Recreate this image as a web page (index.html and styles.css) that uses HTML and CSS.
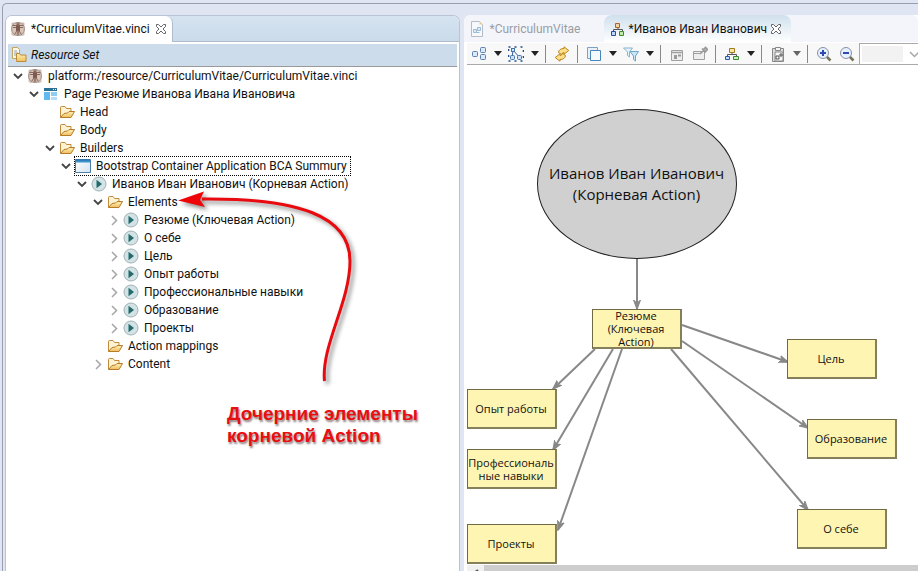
FILE: index.html
```html
<!DOCTYPE html>
<html lang="ru">
<head>
<meta charset="utf-8">
<title>CurriculumVitae.vinci</title>
<link rel="stylesheet" href="styles.css">
</head>
<body>
<svg class="defs" aria-hidden="true">
  <defs>
    <linearGradient id="folderFill" x1="0" y1="0" x2="0" y2="1"><stop offset="0" stop-color="#fff0b8"/><stop offset="1" stop-color="#f0bf5c"/></linearGradient>
    <linearGradient id="winFill" x1="0" y1="0" x2="1" y2="1"><stop offset="0" stop-color="#fff"/><stop offset="1" stop-color="#d3e4f2"/></linearGradient>
    <symbol id="i-vinci" viewBox="0 0 16 16"><path d="M2 2h12v11.500H2z" fill="#dccbc0"/><circle cx="8" cy="8" r="6.5" fill="#d9c6b9" stroke="#a38f84"/><path d="M2 4.500h12M3 6.500h10" stroke="#8a695e" stroke-width="1.200"/><path d="M6 4.500h4v5.500H6z" fill="#7d5a50"/><path d="M7 9.500l-3 5M9 9.500l3 5M7.300 9.500v5M8.700 9.500v5" stroke="#8a695e" stroke-width="1"/><circle cx="8" cy="3" r="1.700" fill="#8d6658"/><path d="M2 2v12h12V2z" fill="none" stroke="#b9a9a0" stroke-width=".7"/></symbol>
    <symbol id="i-page" viewBox="0 0 16 16"><path d="M1 2h13v3H1z" fill="#2c6f94"/><path d="M10 3h1v1h-1zM12 3h1v1h-1z" fill="#fff"/><path d="M1 6h6v8H1z" fill="#63b9ee"/><path d="M8 6h6v4H8z" fill="#8fcdf3"/><path d="M8 11h6v3H8z" fill="#b4def7"/></symbol>
    <symbol id="i-folder" viewBox="0 0 16 16"><path d="M1.500 13.500V3.500q0-1 1-1h3.500l1.500 2h4.500v3" fill="#fdf3d2" stroke="#c08a3a"/><path d="M1.500 13.500l3.500-4 3.500-.500 1.500-1.500h5.500l-3.500 6z" fill="url(#folderFill)" stroke="#b67a2b"/></symbol>
    <symbol id="i-window" viewBox="0 0 16 16"><path d="M.5 1.500h15v13H.5z" fill="url(#winFill)" stroke="#4c7fa6"/><path d="M1 2h14v2.500H1z" fill="#3c93cf"/><path d="M1 2h14" stroke="#2471a8"/></symbol>
    <symbol id="i-action" viewBox="0 0 16 16"><circle cx="8" cy="8" r="7" fill="#d3e3e5" stroke="#a0b2b5"/><path d="M5.500 3.800l5.500 4.200-5.500 4.200z" fill="#226a6c"/></symbol>
    <symbol id="i-resource" viewBox="0 0 16 16"><path d="M1.500 11.500v-11h5l2 2v9z" fill="#fdf8e6" stroke="#c6a45f"/><path d="M3 4h3M3 6h4M3 8h2" stroke="#8fa4c4"/><path d="M5.500 13.500v-7h3l1 1.500h5.500v6.500h-9.500z" fill="url(#folderFill)" stroke="#b98a38"/></symbol>
    <symbol id="i-open" viewBox="0 0 12 12"><path d="M2 4l4 4 4-4" fill="none" stroke="#444" stroke-width="1.800"/></symbol>
    <symbol id="i-shut" viewBox="0 0 12 12"><path d="M4 2l4.500 4.500L4 11" fill="none" stroke="#a6a6a6" stroke-width="1.500"/></symbol>
    <symbol id="i-close" viewBox="0 0 12 12"><path d="M1.500 1.500h2L6 4l2.500-2.500h2v2L8 6l2.500 2.500v2h-2L6 8l-2.500 2.500h-2v-2L4 6 1.500 3.500z" fill="#fff" stroke="#666"/></symbol>
    <symbol id="i-drop" viewBox="0 0 8 5"><path d="M0 0h8L4 5z" fill="currentColor"/></symbol>
    <symbol id="i-diagfile" viewBox="0 0 14 16"><path d="M1.500.500h8l3 3v12h-11z" fill="#f6f8fb" stroke="#b3bcc9"/><path d="M9.500.500l3 3h-3z" fill="#f1cf92"/><path d="M3.500 8.500h3v3h-3zM7.500 6.500h3v3h-3zM6.500 11.500h3" fill="#dcebf7" stroke="#9bbbd6"/></symbol>
    <symbol id="i-tree" viewBox="0 0 16 16"><path d="M8 6v3M3.500 11V8.500h9V11" fill="none" stroke="#555"/><path d="M5.500 2.500h5v4h-5z" fill="#f9e7a6" stroke="#a27a1c"/><path d="M1.500 10.500h4v3h-4z" fill="#bfe0ff" stroke="#2e5d9b"/><path d="M9.500 10.500h5v3h-5z" fill="#c8eebc" stroke="#3d8a34"/></symbol>
    <symbol id="i-treered" viewBox="0 0 16 16"><path d="M8 6v3M3.500 11V8.500h9V11" fill="none" stroke="#555"/><path d="M5.500 2.500h4v4h-4z" fill="#f6d4a2" stroke="#b0602c"/><path d="M1.500 10.500h4v4h-4z" fill="#bfd6ff" stroke="#2c4d9b"/><path d="M9.500 10.500h4v4h-4z" fill="#bdeca8" stroke="#3d8a34"/></symbol>
    <symbol id="i-arrange" viewBox="0 0 16 16"><g fill="#dbe9f8" stroke="#5a7fb0"><rect x="1.500" y="5.500" width="5" height="5" rx="1"/><rect x="9.500" y="1.500" width="5" height="5" rx="1"/><rect x="9.500" y="8.500" width="5" height="5" rx="1"/></g></symbol>
    <symbol id="i-select" viewBox="0 0 16 16"><path d="M.5 1h15v14H.5z" fill="none" stroke="#234d80" stroke-width="1.600" stroke-dasharray="2 4"/><path d="M5 4l7 8M5 5l-1 6" stroke="#3a5f93"/><g fill="#cfe3f7" stroke="#4573ab"><rect x="3.500" y="2.500" width="3" height="3"/><rect x="2.500" y="9.500" width="4" height="4" rx="1"/><rect x="9.500" y="9.500" width="4" height="4" rx="1"/></g></symbol>
    <symbol id="i-refresh" viewBox="0 0 16 16"><g fill="#fde08c" stroke="#bd861d"><path d="M4.500 6.500q.500-4 5.500-4V.800l4.800 3.700L10 8.200V6.500q-2 0-2.500 2z"/><path d="M11.500 9.500q-.500 4-5.500 4v1.700l-4.800-3.700L6 7.800v1.700q2 0 2.500-2z"/></g></symbol>
    <symbol id="i-layers" viewBox="0 0 16 16"><path d="M1.500 1.500h10v11h-10z" fill="#e8f1f9" stroke="#7f9fc4"/><path d="M4.500 4.500h10v10h-10z" fill="#f4fbff" stroke="#4a87b7"/></symbol>
    <symbol id="i-filter" viewBox="0 0 16 16"><path d="M.5 2h9L6.500 6v5l-2-1.500V6z" fill="#e3f3fb" stroke="#87b5cd"/><path d="M7 5.500h8.500l-3 4.500v5l-2-1.500V10z" fill="#c9e8f7" stroke="#6fa6c4"/></symbol>
    <symbol id="i-pane" viewBox="0 0 16 16"><path d="M2.500 4.500h11v10h-11z" fill="#eee" stroke="#a0a0a0"/><path d="M3 6.500h10" stroke="#a0a0a0" stroke-width="1.500"/><path d="M5 9h3v4H5zM9 8.500h3v2H9z" fill="#999"/></symbol>
    <symbol id="i-pin" viewBox="0 0 16 16"><path d="M1.500 5.500h11v8h-11z" fill="#eee" stroke="#a0a0a0"/><path d="M2 7.500h7" stroke="#a0a0a0"/><path d="M8 8l4-4M10 2.500l4 4M11.500 3.500l2-2 2 2-2 2" stroke="#999" stroke-width="1.600" fill="#bbb"/></symbol>
    <symbol id="i-paste" viewBox="0 0 16 16"><path d="M2.500 2.500h11v13h-11z" fill="#ddd" stroke="#888"/><path d="M5.500 1.500h5v3h-5z" fill="#f5f5f5" stroke="#888"/><path d="M5 6h8v9H5z" fill="#f7f7f7" stroke="#888"/><path d="M6 10h3v3H6zM10 8h2v2h-2z" fill="none" stroke="#555"/></symbol>
    <symbol id="i-zoomin" viewBox="0 0 16 16"><path d="M10.500 10.500l4 4" stroke="#777253" stroke-width="2.500"/><circle cx="7" cy="7" r="5.500" fill="#e6f1ff" stroke="#8790a5"/><path d="M4 7h6M7 4v6" stroke="#3148b0" stroke-width="2"/></symbol>
    <symbol id="i-zoomout" viewBox="0 0 16 16"><path d="M10.500 10.500l4 4" stroke="#777253" stroke-width="2.500"/><circle cx="7" cy="7" r="5.500" fill="#e6f1ff" stroke="#8790a5"/><path d="M4 7h6" stroke="#3148b0" stroke-width="2"/></symbol>
  </defs>
</svg>

<div class="workbench">
  <section class="pane pane-tree">
    <div class="tabs tabs-blue">
      <button class="tab tab-white"><svg class="icon"><use href="#i-vinci"/></svg><span>*CurriculumVitae.vinci</span><svg class="close"><use href="#i-close"/></svg></button>
    </div>
    <div class="pane-body">
      <h1 class="set-title"><svg class="icon"><use href="#i-resource"/></svg>Resource Set</h1>
      <ul class="tree">
        <li><div class="row"><button class="twist" aria-label="Collapse"><svg><use href="#i-open"/></svg></button><svg class="icon"><use href="#i-vinci"/></svg><span>platform:/resource/CurriculumVitae/CurriculumVitae.vinci</span></div>
        <ul>
          <li><div class="row"><button class="twist" aria-label="Collapse"><svg><use href="#i-open"/></svg></button><svg class="icon"><use href="#i-page"/></svg><span>Page Резюме Иванова Ивана Ивановича</span></div>
          <ul>
            <li><div class="row leaf"><svg class="icon"><use href="#i-folder"/></svg><span>Head</span></div></li>
            <li><div class="row leaf"><svg class="icon"><use href="#i-folder"/></svg><span>Body</span></div></li>
            <li><div class="row"><button class="twist" aria-label="Collapse"><svg><use href="#i-open"/></svg></button><svg class="icon"><use href="#i-folder"/></svg><span>Builders</span></div>
            <ul>
              <li><div class="row"><button class="twist" aria-label="Collapse"><svg><use href="#i-open"/></svg></button><span class="focused"><svg class="icon"><use href="#i-window"/></svg><span>Bootstrap Container Application BCA Summury</span></span></div>
              <ul>
                <li><div class="row"><button class="twist" aria-label="Collapse"><svg><use href="#i-open"/></svg></button><svg class="icon"><use href="#i-action"/></svg><span>Иванов Иван Иванович (Корневая Action)</span></div>
                <ul>
                  <li><div class="row"><button class="twist" aria-label="Collapse"><svg><use href="#i-open"/></svg></button><svg class="icon"><use href="#i-folder"/></svg><span>Elements</span></div>
                  <ul>
                    <li><div class="row"><button class="twist" aria-label="Expand"><svg><use href="#i-shut"/></svg></button><svg class="icon"><use href="#i-action"/></svg><span>Резюме (Ключевая Action)</span></div></li>
                    <li><div class="row"><button class="twist" aria-label="Expand"><svg><use href="#i-shut"/></svg></button><svg class="icon"><use href="#i-action"/></svg><span>О себе</span></div></li>
                    <li><div class="row"><button class="twist" aria-label="Expand"><svg><use href="#i-shut"/></svg></button><svg class="icon"><use href="#i-action"/></svg><span>Цель</span></div></li>
                    <li><div class="row"><button class="twist" aria-label="Expand"><svg><use href="#i-shut"/></svg></button><svg class="icon"><use href="#i-action"/></svg><span>Опыт работы</span></div></li>
                    <li><div class="row"><button class="twist" aria-label="Expand"><svg><use href="#i-shut"/></svg></button><svg class="icon"><use href="#i-action"/></svg><span>Профессиональные навыки</span></div></li>
                    <li><div class="row"><button class="twist" aria-label="Expand"><svg><use href="#i-shut"/></svg></button><svg class="icon"><use href="#i-action"/></svg><span>Образование</span></div></li>
                    <li><div class="row"><button class="twist" aria-label="Expand"><svg><use href="#i-shut"/></svg></button><svg class="icon"><use href="#i-action"/></svg><span>Проекты</span></div></li>
                  </ul></li>
                  <li><div class="row leaf"><svg class="icon"><use href="#i-folder"/></svg><span>Action mappings</span></div></li>
                  <li><div class="row"><button class="twist" aria-label="Expand"><svg><use href="#i-shut"/></svg></button><svg class="icon"><use href="#i-folder"/></svg><span>Content</span></div></li>
                </ul></li>
              </ul></li>
            </ul></li>
          </ul></li>
        </ul></li>
      </ul>
      <svg class="callout-arrow" viewBox="0 0 190 210" aria-hidden="true"><path d="M149.500 195C146 160 175 116 175 75C175 30 124 12 27 13" fill="none" stroke="#e80a0e" stroke-width="3"/><path d="M3 14.500L29 5.500l-4 8.500 5 7z" fill="#ee0508"/></svg>
      <p class="callout">Дочерние элементы<br>корневой Action</p>
    </div>
  </section>

  <section class="pane pane-diagram">
    <div class="tabs tabs-pale">
      <button class="tab tab-dim"><svg class="icon"><use href="#i-diagfile"/></svg><span>*CurriculumVitae</span></button>
      <button class="tab tab-current"><svg class="icon"><use href="#i-treered"/></svg><span>*Иванов Иван Иванович</span><svg class="close"><use href="#i-close"/></svg></button>
    </div>
    <div class="toolbar">
      <button class="tool" aria-label="Arrange"><svg class="icon"><use href="#i-arrange"/></svg></button><button class="drop" aria-label="Arrange options"><svg><use href="#i-drop"/></svg></button>
      <button class="tool" aria-label="Select"><svg class="icon"><use href="#i-select"/></svg></button><button class="drop" aria-label="Select options"><svg><use href="#i-drop"/></svg></button>
      <span class="sep"></span>
      <button class="tool" aria-label="Refresh"><svg class="icon"><use href="#i-refresh"/></svg></button>
      <span class="sep"></span>
      <button class="tool" aria-label="Layers"><svg class="icon"><use href="#i-layers"/></svg></button><button class="drop" aria-label="Layer options"><svg><use href="#i-drop"/></svg></button>
      <button class="tool" aria-label="Filters"><svg class="icon"><use href="#i-filter"/></svg></button><button class="drop" aria-label="Filter options"><svg><use href="#i-drop"/></svg></button>
      <span class="sep"></span>
      <button class="tool" aria-label="Hide"><svg class="icon"><use href="#i-pane"/></svg></button>
      <button class="tool" aria-label="Pin"><svg class="icon"><use href="#i-pin"/></svg></button>
      <span class="sep"></span>
      <button class="tool" aria-label="Layout"><svg class="icon"><use href="#i-tree"/></svg></button><button class="drop" aria-label="Layout options"><svg><use href="#i-drop"/></svg></button>
      <span class="sep"></span>
      <button class="tool" aria-label="Paste"><svg class="icon"><use href="#i-paste"/></svg></button><button class="drop muted" aria-label="Paste options"><svg><use href="#i-drop"/></svg></button>
      <span class="sep"></span>
      <button class="tool" aria-label="Zoom in"><svg class="icon"><use href="#i-zoomin"/></svg></button>
      <button class="tool" aria-label="Zoom out"><svg class="icon"><use href="#i-zoomout"/></svg></button>
      <span class="combo"><select aria-label="Zoom level" disabled><option></option></select><svg><use href="#i-shut"/></svg></span>
    </div>
    <div class="canvas">
      <svg class="edges" aria-hidden="true">
        <defs><marker id="head" viewBox="0 0 10 8" refX="9" refY="4" markerWidth="10" markerHeight="8" markerUnits="userSpaceOnUse" orient="auto"><path d="M0 .5L9.500 4 0 7.500 3 4z" fill="#888" stroke="#888"/></marker></defs>
        <g fill="none" stroke="#888" stroke-width="2">
          <path d="M170 194V244" marker-end="url(#head)"/><path d="M128 284L86 324" marker-end="url(#head)"/><path d="M146 284L86 385" marker-end="url(#head)"/><path d="M155 284L91 465" marker-end="url(#head)"/><path d="M215 260L321 297" marker-end="url(#head)"/><path d="M215 276L341 363" marker-end="url(#head)"/><path d="M204 284L341 445" marker-end="url(#head)"/>
        </g>
      </svg>
      <div class="node root">Иванов Иван Иванович (Корневая Action)</div>
      <div class="node box n-resume">Резюме (Ключевая Action)</div>
      <div class="node box n-work">Опыт работы</div>
      <div class="node box n-skills"><span>Профессиональные навыки</span></div>
      <div class="node box n-projects">Проекты</div>
      <div class="node box n-goal">Цель</div>
      <div class="node box n-education">Образование</div>
      <div class="node box n-about">О себе</div>
    </div>
    <div class="hscroll"><button class="scroll-left" aria-label="Scroll left"><svg viewBox="0 0 8 8"><path d="M6 1L2 4l4 3" fill="none" stroke="#555" stroke-width="2"/></svg></button><span class="thumb"></span></div>
  </section>
</div>
</body>
</html>
```
FILE: styles.css
```css
* { box-sizing: border-box; }
html, body { height: 100%; }
body {
  margin: 0;
  padding: 3px 0 0 2px;
  background: #dfe5f3;
  font: 12px/18px Roboto, "Open Sans", sans-serif;
  color: #111;
  overflow: hidden;
}
button { font: inherit; color: inherit; background: none; border: 0; padding: 0; margin: 0; }
ul { list-style: none; margin: 0; padding: 0; }
svg { flex: none; }
.defs { position: absolute; width: 0; height: 0; }
.icon { width: 16px; height: 16px; }

.workbench {
  height: 100%;
  display: grid;
  grid-template-columns: minmax(0, 1fr) minmax(0, 1fr);
  gap: 4px;
  padding: 11px 0 0 2px;
  border: 1px solid #9a9eae;
  border-width: 1px 0 0 1px;
  border-top-left-radius: 5px;
}
.pane { display: flex; flex-direction: column; min-width: 0; min-height: 0; }
.pane-tree {
  border: 1px solid #b8c4d6;
  border-bottom: 0;
  border-radius: 7px 7px 0 0;
  background: #fff;
}
.tabs { display: flex; flex: none; height: 26px; border-radius: 6px 6px 0 0; }
.tabs-blue {
  background: linear-gradient(#d5e3f1, #cadbea);
  border-bottom: 1px solid #afbccb;
}
.tab { display: flex; align-items: center; white-space: nowrap; }
.tab .close { width: 12px; height: 12px; }
.tab-white {
  height: 26px;
  padding: 0 5px 0 4px;
  gap: 5px;
  background: #fff;
  border-right: 1px solid #afbccb;
  border-radius: 6px 7px 0 0;
}
.pane-body { position: relative; flex: 1; min-height: 0; padding: 2px 2px 0; }
.set-title {
  display: flex;
  align-items: center;
  gap: 4px;
  margin: 0;
  height: 23px;
  padding-left: 3px;
  background: #cddceb;
  border-bottom: 1px solid #999;
  font-size: 12px;
  font-weight: 400;
  font-style: italic;
}
.tree ul { padding-left: 16px; }
.row { display: flex; align-items: center; height: 18px; gap: 4px; padding-left: 3px; white-space: nowrap; }
.row.leaf { padding-left: 19px; }
.row .icon { margin-right: 1px; }
.twist { width: 13px; height: 14px; margin-right: -1px; display: grid; place-items: center; }
.twist svg { width: 12px; height: 12px; }
.focused { display: flex; align-items: center; height: 18px; gap: 4px; padding-right: 3px; outline: 1px dotted #000; }

.callout-arrow {
  position: absolute;
  left: 169px;
  top: 144px;
  width: 190px;
  height: 210px;
  filter: drop-shadow(3px 3px 2px rgba(0, 0, 0, .45));
}
.callout {
  position: absolute;
  left: 221px;
  top: 361px;
  margin: 0;
  font: bold 19px/22px "Liberation Sans", sans-serif;
  color: #e80e12;
  text-shadow: 1px 2px 2px rgba(70, 40, 40, .6);
  white-space: nowrap;
}

.pane-diagram { background: #fff; border-radius: 7px 0 0 0; }
.tabs-pale { background: #f3f5fb; height: 27px; }
.tab-dim { padding-left: 6px; gap: 6px; width: 140px; color: #999da6; }
.tab-dim .icon { width: 14px; }
.tab-current {
  width: 187px;
  padding-left: 6px;
  gap: 3px;
  background: linear-gradient(#cfe0ed, #fff);
  border-radius: 8px 8px 0 0;
}
.toolbar {
  display: flex;
  align-items: center;
  flex: none;
  height: 22px;
  margin: 1px 0 0 3px;
  padding-left: 1px;
  background: #f8f8f8;
  border-bottom: 1px solid #aaa;
}
.tool { width: 23px; height: 20px; flex: none; display: grid; place-items: center; }
.drop { width: 14px; height: 20px; flex: none; display: grid; place-items: center; color: #222; }
.drop.muted { color: #666; }
.drop svg { width: 8px; height: 5px; }
.sep { width: 1px; height: 18px; flex: none; margin: 0 5px 0 3px; background: #888; }
.combo {
  flex: 1;
  height: 22px;
  display: flex;
  align-items: center;
  gap: 6px;
  padding-left: 2px;
  background: #fff;
  border: 1px solid #aaa;
  border-right: 0;
}
.combo select { appearance: none; width: 41px; height: 16px; flex: none; border: 0; background: #ececec; }
.combo svg { width: 12px; height: 12px; transform: rotate(90deg); }

.canvas { position: relative; flex: 1; min-height: 0; margin-left: 3px; overflow: hidden; font-family: "Open Sans", "Noto Sans", sans-serif; }
.edges { position: absolute; inset: 0; width: 100%; height: 100%; }
.node { position: absolute; display: flex; align-items: center; justify-content: center; text-align: center; overflow-wrap: anywhere; }
.root {
  left: 70px;
  top: 44px;
  width: 200px;
  height: 150px;
  border: 1px solid #222;
  border-radius: 50%;
  background: #d0d0d0;
  font-size: 15px;
  line-height: 21px;
}
.box {
  width: 90px;
  height: 40px;
  border: 1px solid #6f6a45;
  border-width: 1px 2px 2px 1px;
  border-color: #6f6a45 #857f5c #857f5c #6f6a45;
  background: #fff5b3;
  font-size: 11px;
  line-height: 13px;
}
.n-resume { left: 125px; top: 244px; padding: 0 12px; }
.n-work { left: 0; top: 324px; }
.n-skills { left: 0; top: 384px; }
.n-projects { left: 0; top: 459px; }
.n-goal { left: 320px; top: 274px; }
.n-education { left: 340px; top: 354px; }
.n-about { left: 330px; top: 444px; }

.hscroll { display: flex; flex: none; height: 6px; margin-left: 3px; overflow: hidden; background: #f0f0f0; }
.scroll-left { width: 17px; height: 17px; display: flex; padding: 4px 5px; }
.scroll-left svg { width: 8px; height: 8px; }
.thumb { flex: 1; background: #cdcdcd; }
```
